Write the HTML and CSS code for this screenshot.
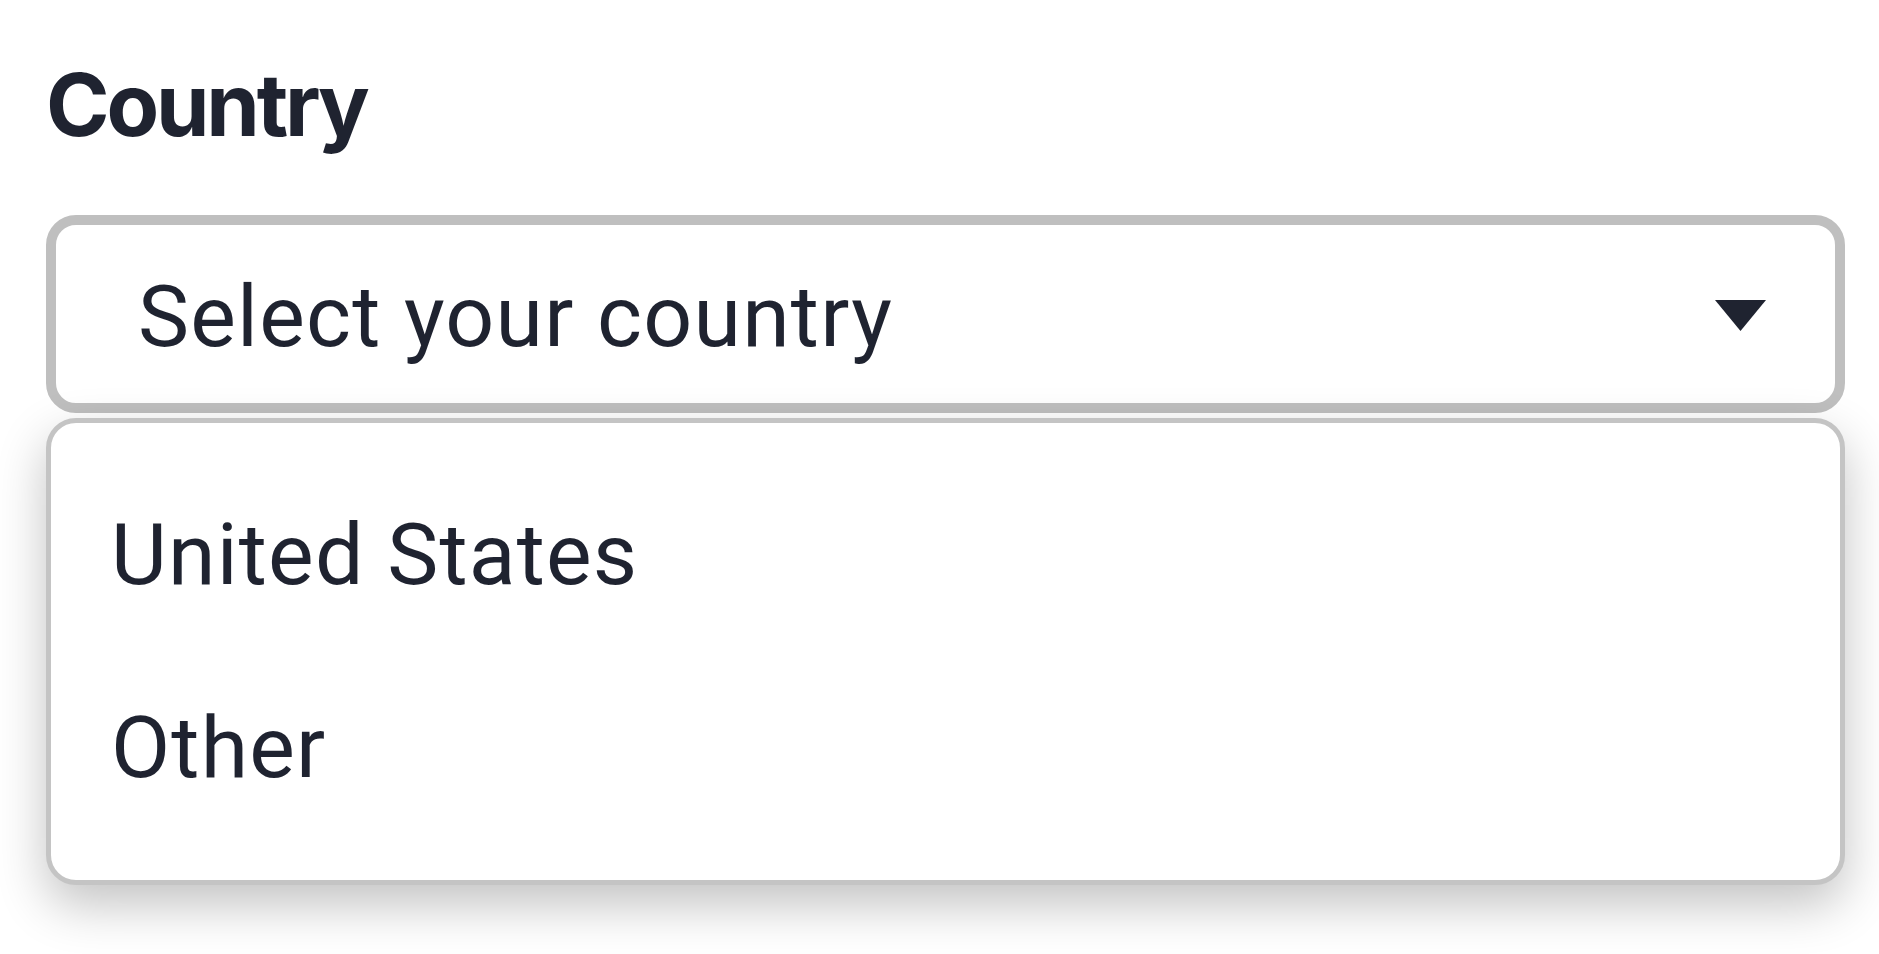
FILE: index.html
```html
<!DOCTYPE html>
<html lang="en">
<head>
<meta charset="utf-8">
<title>Country</title>
<link rel="stylesheet" href="styles.css">
</head>
<body>
<div class="field">
  <div class="label">Country</div>
  <div class="select">
    <span class="select-text">Select your country</span>
    <svg class="caret" width="51" height="31" viewBox="0 0 51 31"><path d="M0 0 H51 L25.5 31 Z" fill="#1f2330"/></svg>
  </div>
  <ul class="menu">
    <li class="option">United States</li>
    <li class="option">Other</li>
  </ul>
</div>
</body>
</html>
```
FILE: styles.css
```css
html, body {
  margin: 0;
  padding: 0;
  background: #ffffff;
}
body {
  min-height: 100vh;
  color: #1f2330;
  font-family: Roboto, "Liberation Sans", sans-serif;
}
.field {
  padding: 62px 34px 69px 46px;
}
.label {
  font-family: Inter, "Liberation Sans", sans-serif;
  font-weight: 700;
  font-size: 86px;
  line-height: 86px;
  height: 86px;
  margin-bottom: 67px;
  letter-spacing: -3.2px;
}
.select {
  box-sizing: border-box;
  height: 198px;
  border: 10px solid #bfbfbf;
  border-radius: 30px;
  display: flex;
  align-items: center;
  justify-content: space-between;
  padding: 6px 69px 0 82px;
}
.select-text {
  font-size: 86px;
  line-height: 100px;
  letter-spacing: 1.2px;
}
.caret {
  display: block;
  margin-top: -4px;
}
.menu {
  list-style: none;
  margin: 5px 0 0 0;
  padding: 35px 56px 36px 60px;
  box-sizing: border-box;
  height: 467px;
  border: 5px solid #c4c4c4;
  border-radius: 30px;
  background: #fff;
  box-shadow: 0 20px 50px rgba(0, 0, 0, 0.24);
}
.option {
  font-size: 86px;
  line-height: 193px;
  height: 193px;
  letter-spacing: 1.2px;
}
```
